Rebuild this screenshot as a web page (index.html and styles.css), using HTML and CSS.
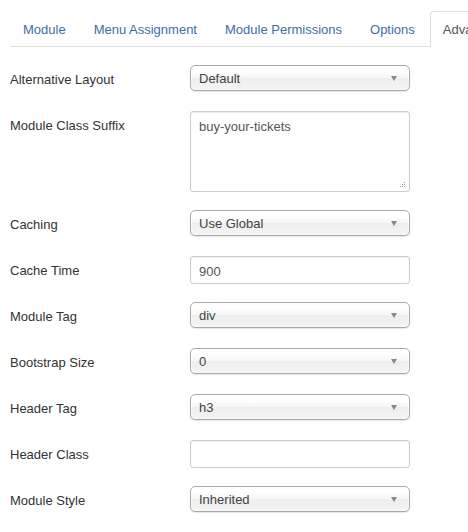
FILE: index.html
```html
<!DOCTYPE html>
<html>
<head>
<meta charset="utf-8">
<link rel="stylesheet" href="styles.css">
</head>
<body>
<div class="page">
  <ul class="tabs">
    <li class="tab"><a>Module</a></li>
    <li class="tab"><a>Menu Assignment</a></li>
    <li class="tab"><a>Module Permissions</a></li>
    <li class="tab"><a>Options</a></li>
    <li class="tab active"><a>Advanced</a></li>
  </ul>
  <div class="form">
    <div class="group">
      <div class="label">Alternative Layout</div>
      <div class="select"><span>Default</span><i class="arrow"></i></div>
    </div>
    <div class="group">
      <div class="label">Module Class Suffix</div>
      <div class="area-wrap">
        <textarea class="textarea">buy-your-tickets</textarea>
        <svg class="grip" width="6" height="6" viewBox="0 0 6 6">
          <rect x="4" y="0" width="1" height="1" fill="#999"/>
          <rect x="2" y="2" width="1" height="1" fill="#999"/>
          <rect x="4" y="2" width="1" height="1" fill="#999"/>
          <rect x="0" y="4" width="1" height="1" fill="#999"/>
          <rect x="2" y="4" width="1" height="1" fill="#999"/>
          <rect x="4" y="4" width="1" height="1" fill="#999"/>
        </svg>
      </div>
    </div>
    <div class="group">
      <div class="label">Caching</div>
      <div class="select"><span>Use Global</span><i class="arrow"></i></div>
    </div>
    <div class="group">
      <div class="label">Cache Time</div>
      <input class="input" type="text" value="900">
    </div>
    <div class="group">
      <div class="label">Module Tag</div>
      <div class="select"><span>div</span><i class="arrow"></i></div>
    </div>
    <div class="group">
      <div class="label">Bootstrap Size</div>
      <div class="select"><span>0</span><i class="arrow"></i></div>
    </div>
    <div class="group">
      <div class="label">Header Tag</div>
      <div class="select"><span>h3</span><i class="arrow"></i></div>
    </div>
    <div class="group">
      <div class="label">Header Class</div>
      <input class="input" type="text" value="">
    </div>
    <div class="group">
      <div class="label">Module Style</div>
      <div class="select"><span>Inherited</span><i class="arrow"></i></div>
    </div>
  </div>
</div>
</body>
</html>
```
FILE: styles.css
```css
html, body {
  margin: 0;
  padding: 0;
  overflow: hidden;
  background: #fff;
}
body {
  font-family: "Liberation Sans", Arial, Helvetica, sans-serif;
  font-size: 13px;
  line-height: 18px;
  color: #333;
}
.page {
  padding: 11px 0 0 10px;
}
.tabs {
  list-style: none;
  margin: 0;
  padding: 0;
  display: flex;
  flex-wrap: nowrap;
  border-bottom: 1px solid #ddd;
  white-space: nowrap;
}
.tab {
  margin-bottom: -1px;
  flex: none;
}
.tab a {
  display: block;
  padding: 9px 12px 7px;
  margin-right: 2px;
  line-height: 18px;
  border: 1px solid transparent;
  border-radius: 4px 4px 0 0;
  color: #3d6ea6;
}
.tab.active a {
  color: #555;
  background: #fff;
  border-color: #ddd #ddd transparent;
}
.form {
  padding-top: 18px;
}
.group {
  display: flex;
  align-items: flex-start;
  margin-bottom: 18px;
}
.label {
  width: 180px;
  flex: none;
  padding-top: 6px;
  line-height: 18px;
  color: #333;
}
.select {
  box-sizing: border-box;
  width: 220px;
  height: 26px;
  margin-bottom: 2px;
  border: 1px solid #aaa;
  border-radius: 5px;
  background: linear-gradient(#fff 20%, #f6f6f6 50%, #eee 52%, #f4f4f4 100%);
  box-shadow: inset 0 0 3px #fff, 0 1px 1px rgba(0,0,0,0.1);
  display: flex;
  align-items: center;
  justify-content: space-between;
  padding: 1px 12px 0 8px;
  color: #444;
  line-height: 24px;
}
.arrow {
  width: 0;
  height: 0;
  margin-top: -1px;
  border-left: 3.5px solid transparent;
  border-right: 3.5px solid transparent;
  border-top: 5px solid #888;
}
.input, .textarea {
  box-sizing: border-box;
  width: 220px;
  margin: 0;
  border: 1px solid #ccc;
  border-radius: 3px;
  box-shadow: inset 0 1px 1px rgba(0,0,0,0.075);
  font-family: "Liberation Sans", Arial, Helvetica, sans-serif;
  font-size: 13px;
  line-height: 18px;
  color: #555;
  background: #fff;
  outline: none;
}
.input {
  height: 28px;
  padding: 5px 8px 3px;
}
.area-wrap {
  position: relative;
  width: 220px;
}
.textarea {
  height: 81px;
  padding: 6px 8px 4px;
  resize: none;
  display: block;
}
.grip {
  position: absolute;
  right: 4px;
  bottom: 4px;
}
```
